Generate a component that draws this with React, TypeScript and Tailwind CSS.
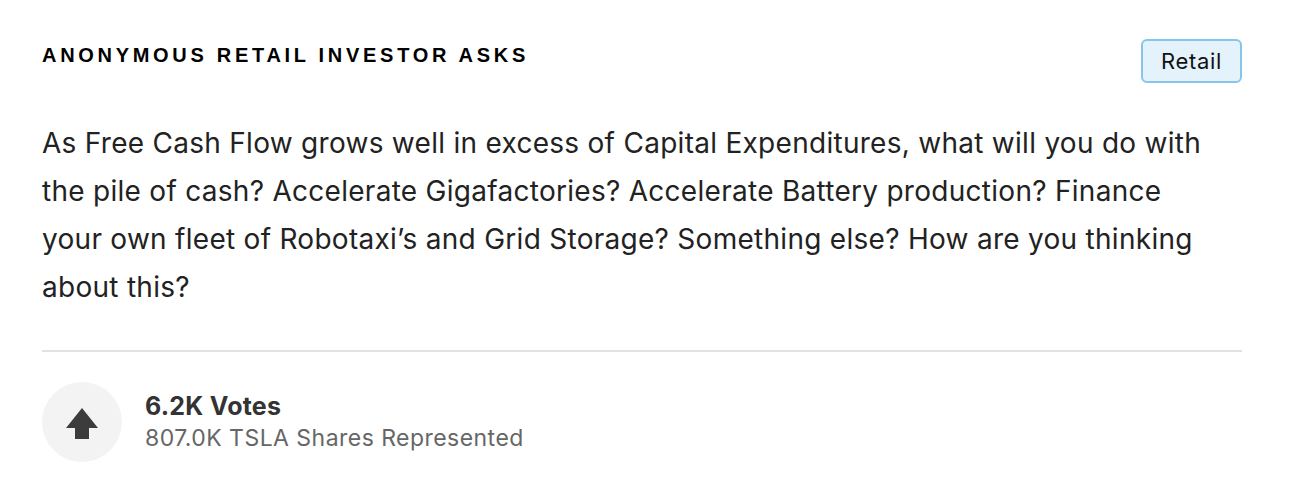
export default function App() {
    return (
        <div className="min-h-[498px] bg-white pl-[42px] pr-[48px] pt-[39px] font-['Inter','Liberation_Sans',sans-serif]">
            <div className="flex items-start justify-between">
                <h2 className="pt-[4px] font-['Liberation_Sans',Arial,sans-serif] text-[20px] font-bold uppercase leading-[24px] tracking-[0.185em] text-black">
                    Anonymous Retail Investor Asks
                </h2>
                <span className="rounded-[6px] border-2 border-[#86c6ea] bg-[#e4f3fb] px-[18px] py-[8px] text-[22px] leading-[24px] tracking-[0.03em] text-[#111]">
                    Retail
                </span>
            </div>

            <p className="mt-[36px] pr-[20px] text-[28px] leading-[48px] tracking-[0.01em] text-[#222]">
                As Free Cash Flow grows well in excess of Capital Expenditures, what will you do with the pile of cash?
                Accelerate Gigafactories? Accelerate Battery production? Finance your own fleet of Robotaxi’s and Grid
                Storage? Something else? How are you thinking about this?
            </p>

            <div className="mt-[39px] h-[2px] bg-[#e2e2e2]" />

            <div className="mt-[30px] flex items-center gap-[23px]">
                <button className="flex h-[80px] w-[80px] items-center justify-center rounded-full bg-[#f3f3f3]">
                    <svg width="32" height="31" viewBox="0 0 32 31" className="mt-[3px] fill-[#3c3c3c]">
                        <path d="M16 0 L32 20 L23 20 L23 31 L9 31 L9 20 L0 20 Z" />
                    </svg>
                </button>
                <div className="flex flex-col">
                    <span className="text-[25px] font-bold leading-[32px] tracking-[0.01em] text-[#333]">6.2K Votes</span>
                    <span className="text-[23px] leading-[32px] tracking-[0.02em] text-[#666]">807.0K TSLA Shares Represented</span>
                </div>
            </div>
        </div>
    )
}
